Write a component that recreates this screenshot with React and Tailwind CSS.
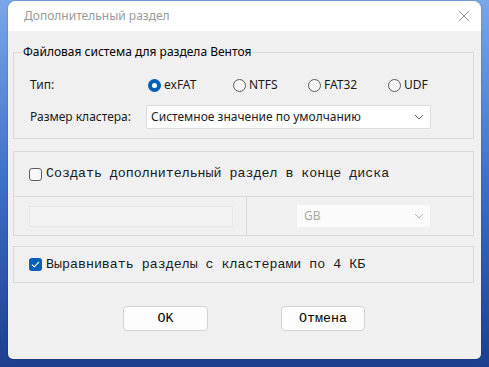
import React from "react";

const sans = { fontFamily: '"Noto Sans", "Open Sans", sans-serif' };
const mono = { fontFamily: '"Liberation Mono", "Courier New", monospace' };

function Radio({ checked, label, w }) {
  return (
    <div className={`flex items-center ${w}`}>
      {checked ? (
        <span className="w-[13px] h-[13px] rounded-full bg-[#005fb8] flex items-center justify-center">
          <span className="w-[5px] h-[5px] rounded-full bg-white" />
        </span>
      ) : (
        <span className="w-[13px] h-[13px] rounded-full border border-[#5a5a5a] bg-[#f7f7f7]" />
      )}
      <span className="ml-[3px] text-[12px] text-[#1a1a1a]">{label}</span>
    </div>
  );
}

function Chevron({ color = "#606060" }) {
  return (
    <svg width="10" height="6" viewBox="0 0 10 6" fill="none">
      <path d="M1 1 L5 5 L9 1" stroke={color} strokeWidth="1" />
    </svg>
  );
}

function CheckBox({ checked }) {
  return checked ? (
    <span className="w-[13px] h-[13px] rounded-[3px] bg-[#005fb8] flex items-center justify-center">
      <svg width="9" height="7" viewBox="0 0 9 7" fill="none">
        <path d="M1 3.6 L3.3 5.8 L8 1" stroke="white" strokeWidth="1.1" />
      </svg>
    </span>
  ) : (
    <span className="w-[13px] h-[13px] rounded-[3px] border border-[#5c5c5c] bg-[#f7f7f7]" />
  );
}

export default function App() {
  return (
    <div className="w-[489px] h-[367px] overflow-hidden bg-gradient-to-b from-[#7aa7e8] via-[#3d6fc9] to-[#1d3f8f] pl-[8px] pt-[1px]">
      <div className="w-[473px] h-[358px] rounded-t-[8px] rounded-b-[5px] bg-[#f0f0f0] overflow-hidden flex flex-col shadow-[0_0_2px_rgba(0,0,0,0.3)]">
        <div className="h-[30px] bg-white flex items-center justify-between pl-[16px] pr-[11px] shrink-0" style={sans}>
          <span className="text-[12px] text-[#9a9a9a] leading-none">Дополнительный раздел</span>
          <svg width="12" height="12" viewBox="0 0 12 12" fill="none">
            <path d="M1 1 L11 11 M11 1 L1 11" stroke="#8a8a8a" strokeWidth="1" />
          </svg>
        </div>

        <div className="pl-[5px] pt-[12px] flex flex-col">
          <fieldset className="w-[461px] border border-[#d9d9d9] pb-[9px]" style={sans}>
            <legend className="ml-[8px] px-[1px] text-[12px] leading-[18px] text-black">
              Файловая система для раздела Вентоя
            </legend>
            <div className="pl-[16px]">
              <div className="flex items-center h-[20px] mt-[14px]">
                <span className="w-[118px] text-[12px] text-[#1a1a1a]">Тип:</span>
                <Radio checked label="exFAT" w="w-[85px]" />
                <Radio label="NTFS" w="w-[75px]" />
                <Radio label="FAT32" w="w-[80px]" />
                <Radio label="UDF" w="w-[40px]" />
              </div>
              <div className="flex items-center mt-[10px]">
                <span className="w-[116px] text-[12px] text-[#1a1a1a]">Размер кластера:</span>
                <div className="w-[285px] h-[24px] bg-white border border-[#dcdcdc] rounded-[2px] flex items-center justify-between pl-[4px] pr-[6px]">
                  <span className="text-[12px] text-[#1a1a1a]">Системное значение по умолчанию</span>
                  <Chevron />
                </div>
              </div>
            </div>
          </fieldset>

          <div className="w-[461px] mt-[12px] border border-[#d9d9d9] flex flex-col">
            <div className="h-[45px] flex items-center pl-[15px] border-b border-[#d9d9d9]" style={mono}>
              <CheckBox />
              <span className="ml-[4px] text-[13.3px] text-[#1a1a1a]">Создать дополнительный раздел в конце диска</span>
            </div>
            <div className="h-[38px] flex">
              <div className="w-[233px] border-r border-[#d9d9d9] flex items-center pl-[15px]">
                <div className="w-[204px] h-[21px] border border-[#e6e6e6] bg-[#f3f3f3]" />
              </div>
              <div className="flex-1 flex items-center pl-[50px]">
                <div className="w-[133px] h-[22px] bg-[#fbfbfb] flex items-center justify-between pl-[7px] pr-[6px]" style={sans}>
                  <span className="text-[12px] text-[#a8a8a8]">GB</span>
                  <Chevron color="#b0b0b0" />
                </div>
              </div>
            </div>
          </div>

          <div className="w-[461px] h-[37px] mt-[10px] border border-[#d9d9d9] flex items-center pl-[15px]" style={mono}>
            <CheckBox checked />
            <span className="ml-[4px] text-[13.3px] text-[#1a1a1a]">Выравнивать разделы с кластерами по 4 КБ</span>
          </div>

          <div className="flex mt-[23px] pl-[110px] gap-[73px]" style={mono}>
            <div className="w-[85px] h-[25px] bg-[#fdfdfd] border border-[#d3d3d3] rounded-[4px] flex items-center justify-center text-[13.3px] text-black">OK</div>
            <div className="w-[84px] h-[25px] bg-[#fdfdfd] border border-[#d3d3d3] rounded-[4px] flex items-center justify-center text-[13.3px] text-black">Отмена</div>
          </div>
        </div>
      </div>
    </div>
  );
}
